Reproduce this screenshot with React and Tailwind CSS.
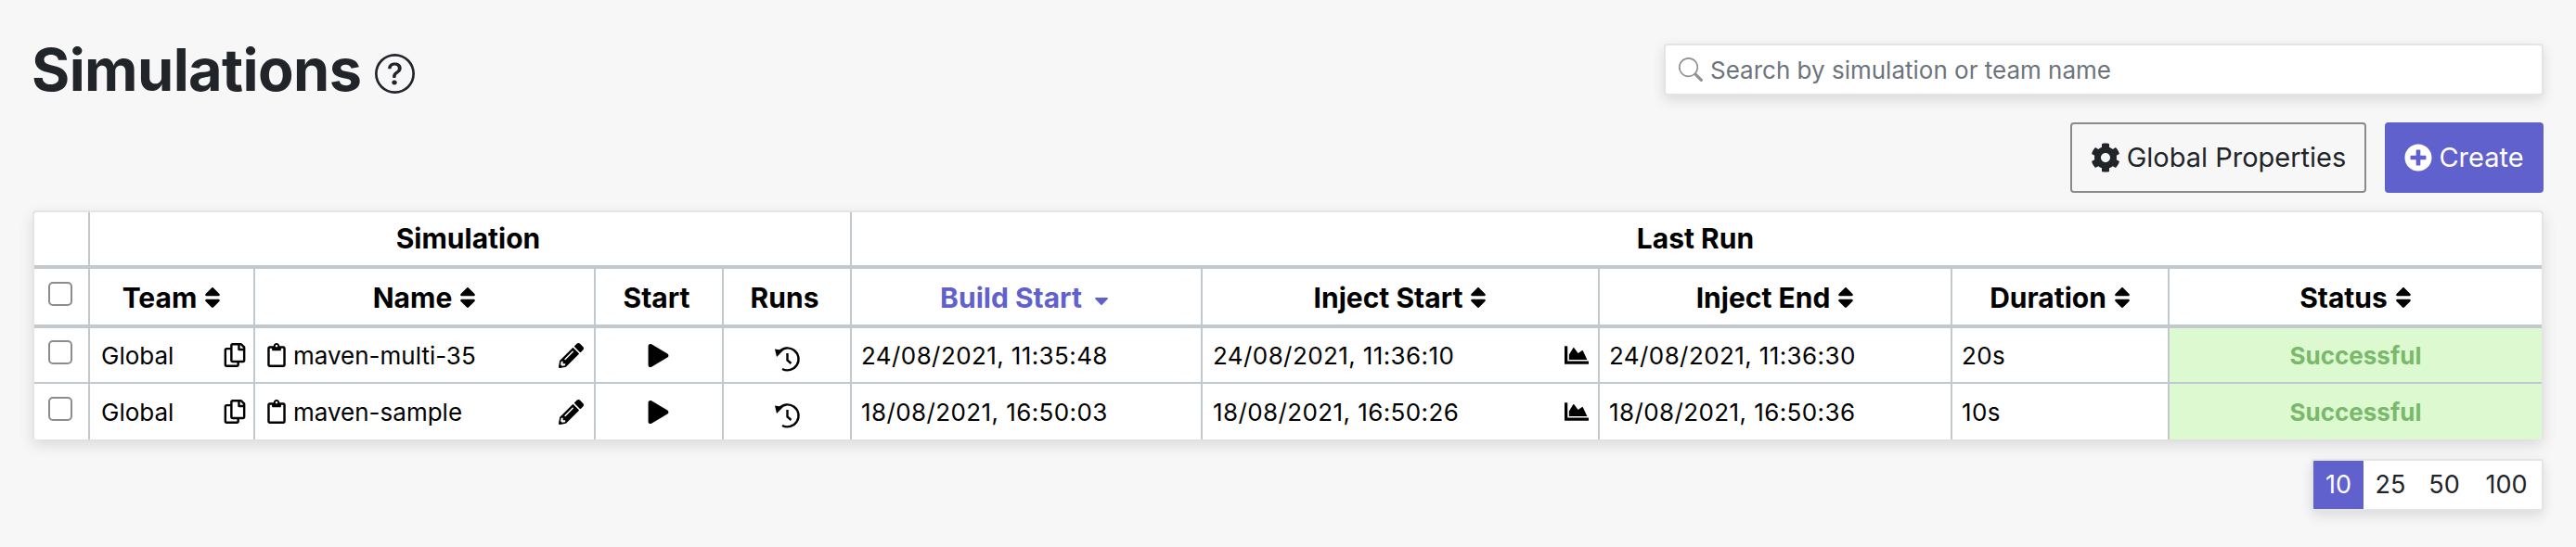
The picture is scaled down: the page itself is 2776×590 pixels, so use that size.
import React from 'react';
import { FaSort, FaCaretDown, FaPlay, FaChartArea, FaPencilAlt, FaRegCopy, FaRegClipboard, FaCog, FaPlusCircle } from 'react-icons/fa';
import { BsSearch, BsQuestionCircle } from 'react-icons/bs';

const rows = [
    { team: 'Global', name: 'maven-multi-35', build: '24/08/2021, 11:35:48', start: '24/08/2021, 11:36:10', end: '24/08/2021, 11:36:30', duration: '20s', status: 'Successful' },
    { team: 'Global', name: 'maven-sample', build: '18/08/2021, 16:50:03', start: '18/08/2021, 16:50:26', end: '18/08/2021, 16:50:36', duration: '10s', status: 'Successful' },
];

function HistoryIcon() {
    return (
        <svg viewBox="0 0 30 30" className="w-[30px] h-[30px] mx-auto translate-y-[4px]">
            <path d="M6.5 7.5A12 12 0 1 1 10 26" fill="none" stroke="currentColor" strokeWidth="2.4" />
            <path d="M2 4.5l9 1.5-7 7z" fill="currentColor" />
            <path d="M15.5 9v7.5l4 3.5" fill="none" stroke="currentColor" strokeWidth="2.4" />
        </svg>
    );
}

function Checkbox() {
    return <span className="block w-[26px] h-[26px] ml-[15px] -translate-y-[3px] rounded-[5px] border-2 border-[#8a8d90] bg-white" />;
}

function SortHead({ label, sortable = true }) {
    return (
        <th className="border-2 border-b-4 border-[#c2c9ce] p-0 pt-[2px] text-[30px] font-bold text-black">
            <span className={'inline-flex items-center gap-[8px]' + (sortable ? '' : ' pr-[5px]')}>
                {label}
                {sortable && <FaSort className="text-[28px] w-[18px]" />}
            </span>
        </th>
    );
}

function Row({ row, last }) {
    const cell = 'border-2 border-[#c2c9ce] p-0 align-middle' + (last ? ' border-b-0' : '');
    return (
        <tr className="h-[61px]">
            <td className={cell + ' border-l-0'}><Checkbox /></td>
            <td className={cell}>
                <div className="flex items-center justify-between pl-[12px] pr-[7px]">
                    <span>{row.team}</span>
                    <FaRegCopy className="text-[26px]" />
                </div>
            </td>
            <td className={cell}>
                <div className="flex items-center justify-between pl-[10px] pr-[11px]">
                    <span className="flex items-center gap-[5px]"><FaRegClipboard className="text-[26px]" />{row.name}</span>
                    <FaPencilAlt className="text-[27px]" />
                </div>
            </td>
            <td className={cell}><FaPlay className="text-[25px] mx-auto translate-x-[-1px]" /></td>
            <td className={cell}><HistoryIcon /></td>
            <td className={cell + ' pl-[10px] tracking-[0.4px]'}>{row.build}</td>
            <td className={cell}>
                <div className="flex items-center justify-between pl-[11px] pr-[10px]">
                    <span className="tracking-[0.4px]">{row.start}</span>
                    <FaChartArea className="text-[26px]" />
                </div>
            </td>
            <td className={cell + ' pl-[10px] tracking-[0.4px]'}>{row.end}</td>
            <td className={cell + ' pl-[10px] tracking-[0.4px]'}>{row.duration}</td>
            <td className={cell + ' border-r-0 bg-[#dcf9d0] text-center font-bold text-[#7ab96c]'}>{row.status}</td>
        </tr>
    );
}

export default function App() {
    return (
        <div className="min-h-[590px] bg-[#f7f7f7] px-[35px] pt-[47px] text-[#212529] text-[29px] font-['Inter','Noto_Sans',sans-serif]">
            <div className="flex justify-between">
                <div className="flex items-start gap-[15px]">
                    <h1 className="text-[63px] leading-[56px] font-bold tracking-[-0.6px] -ml-[1px]">Simulations</h1>
                    <BsQuestionCircle className="text-[43px] mt-[11px]" />
                </div>
                <div className="flex flex-col items-end">
                    <div className="flex items-center w-[948px] h-[56px] pl-[14px] gap-[8px] rounded-[4px] bg-white border-2 border-[#e4e4e4] shadow-[0_5px_14px_rgba(0,0,0,0.12)] text-[26px] text-[#6c757d]">
                        <BsSearch className="text-[26px] text-[#8d9296]" />
                        Search by simulation or team name
                    </div>
                    <div className="flex gap-[20px] mt-[29px]">
                        <button className="flex items-center justify-center gap-[7px] w-[319px] h-[76px] rounded-[4px] border-2 border-[#888b8d] text-[#212529]">
                            <FaCog className="text-[32px]" />Global Properties
                        </button>
                        <button className="flex items-center justify-center gap-[7px] w-[171px] h-[76px] rounded-[4px] bg-[#6161cd] text-white">
                            <FaPlusCircle className="text-[30px]" />Create
                        </button>
                    </div>
                </div>
            </div>

            <div className="mt-[19px] rounded-[4px] bg-white border-t-2 border-x-2 border-[#e4e4e4] border-b-0 shadow-[0_6px_16px_rgba(0,0,0,0.12)] overflow-hidden">
                <table className="w-full table-fixed border-collapse text-[26px] text-black">
                    <colgroup>
                        <col className="w-[59px]" /><col className="w-[178px]" /><col className="w-[367px]" /><col className="w-[138px]" /><col className="w-[138px]" />
                        <col className="w-[378px]" /><col className="w-[428px]" /><col className="w-[380px]" /><col className="w-[234px]" /><col />
                    </colgroup>
                    <thead>
                        <tr className="h-[59px]">
                            <th className="border-2 border-t-0 border-l-0 border-b-4 border-[#c2c9ce]"></th>
                            <th colSpan={4} className="border-2 border-t-0 border-b-4 border-[#c2c9ce] pr-[4px] text-[30px] font-bold">Simulation</th>
                            <th colSpan={5} className="border-2 border-t-0 border-r-0 border-b-4 border-[#c2c9ce] pr-[3px] text-[30px] font-bold">Last Run</th>
                        </tr>
                        <tr className="h-[64px]">
                            <th className="border-2 border-l-0 border-b-4 border-[#c2c9ce] p-0"><Checkbox /></th>
                            <SortHead label="Team" />
                            <SortHead label="Name" />
                            <SortHead label="Start" sortable={false} />
                            <SortHead label="Runs" sortable={false} />
                            <th className="border-2 border-b-4 border-[#c2c9ce] p-0 pt-[2px] text-[30px] font-bold text-[#6161cd]">
                                <span className="inline-flex items-center gap-[9px]">Build Start<FaCaretDown className="text-[24px] mt-[6px]" /></span>
                            </th>
                            <SortHead label="Inject Start" />
                            <SortHead label="Inject End" />
                            <SortHead label="Duration" />
                            <th className="border-2 border-b-4 border-r-0 border-[#c2c9ce] p-0 pt-[2px] text-[30px] font-bold">
                                <span className="inline-flex items-center gap-[8px]">Status<FaSort className="text-[28px] w-[18px]" /></span>
                            </th>
                        </tr>
                    </thead>
                    <tbody>
                        {rows.map((row, i) => <Row key={row.name} row={row} last={i === rows.length - 1} />)}
                    </tbody>
                </table>
            </div>

            <div className="flex justify-end mt-[21px]">
                <div className="flex items-center h-[56px] rounded-[3px] bg-white border-2 border-[#e4e4e4] shadow-[0_5px_14px_rgba(0,0,0,0.12)] text-[27px] overflow-hidden">
                    <span className="flex items-center justify-center w-[54px] h-full bg-[#6161cd] text-white">10</span>
                    <span className="w-[58px] text-center">25</span>
                    <span className="w-[58px] text-center">50</span>
                    <span className="w-[76px] text-center">100</span>
                </div>
            </div>
        </div>
    );
}
